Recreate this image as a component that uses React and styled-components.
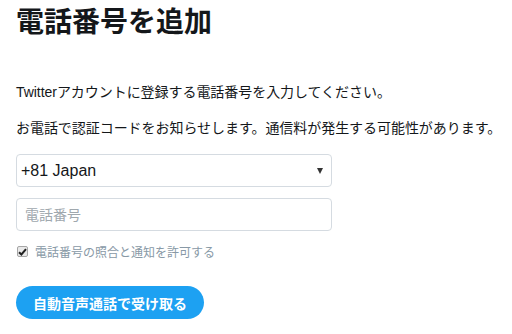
import React from "react";
import styled, { createGlobalStyle } from "styled-components";

const GlobalStyle = createGlobalStyle`
  body {
    margin: 0;
    background: #fff;
    font-family: "Liberation Sans", "Noto Sans CJK JP", sans-serif;
    color: #14171a;
  }
`;

const Page = styled.div`
  padding: 5px 16px 0;
  width: 496px;
`;

const Title = styled.h1`
  margin: 0;
  font-size: 28px;
  line-height: 36px;
  font-weight: bold;
  color: #14171a;
`;

const Text = styled.p`
  margin: 0;
  font-size: 14px;
  line-height: 20px;
  letter-spacing: -0.05px;
  white-space: nowrap;
  color: #14171a;
  margin-top: ${(p) => p.$top}px;
`;

const Field = styled.div`
  width: 316px;
  height: 33px;
  box-sizing: border-box;
  border: 1px solid #d5dbe1;
  border-radius: 4px;
  margin-top: ${(p) => p.$top}px;
  display: flex;
  align-items: center;
  padding: 0 8px 0 4px;
`;

const SelectText = styled.span`
  flex: 1;
  font-size: 16px;
  color: #14171a;
`;

const Caret = styled.span`
  width: 0;
  height: 0;
  border-left: 3px solid transparent;
  border-right: 3px solid transparent;
  border-top: 6px solid #333;
`;

const Input = styled.input`
  border: none;
  outline: none;
  width: 100%;
  padding: 0 4px;
  font-family: inherit;
  font-size: 14px;
  color: #14171a;
  &::placeholder {
    color: #a0a8ae;
  }
`;

const CheckRow = styled.label`
  display: flex;
  align-items: center;
  gap: 7px;
  margin-top: 12px;
  font-size: 12px;
  color: #8899a6;
`;

const Box = styled.span`
  width: 11px;
  height: 11px;
  box-sizing: border-box;
  border: 1px solid #a6a6a6;
  border-radius: 2px;
  background: #e9e9e9;
  display: flex;
  align-items: center;
  justify-content: center;
  margin-left: 1px;
`;

const Button = styled.button`
  display: block;
  margin-top: 26px;
  height: 33px;
  padding: 0 17px;
  border: none;
  border-radius: 17px;
  background: #1da1f2;
  color: #fff;
  font-family: inherit;
  font-size: 14px;
  font-weight: bold;
`;

export default function App() {
  return (
    <Page>
      <GlobalStyle />
      <Title>電話番号を追加</Title>
      <Text $top={41}>Twitterアカウントに登録する電話番号を入力してください。</Text>
      <Text $top={16}>お電話で認証コードをお知らせします。通信料が発生する可能性があります。</Text>
      <Field $top={16}>
        <SelectText>+81 Japan</SelectText>
        <Caret />
      </Field>
      <Field $top={11}>
        <Input placeholder="電話番号" />
      </Field>
      <CheckRow>
        <Box>
          <svg width="9" height="8" viewBox="0 0 9 8">
            <path d="M1 4.2 L3.4 6.5 L8 1.2" fill="none" stroke="#222" strokeWidth="2" />
          </svg>
        </Box>
        電話番号の照合と通知を許可する
      </CheckRow>
      <Button>自動音声通話で受け取る</Button>
    </Page>
  );
}
